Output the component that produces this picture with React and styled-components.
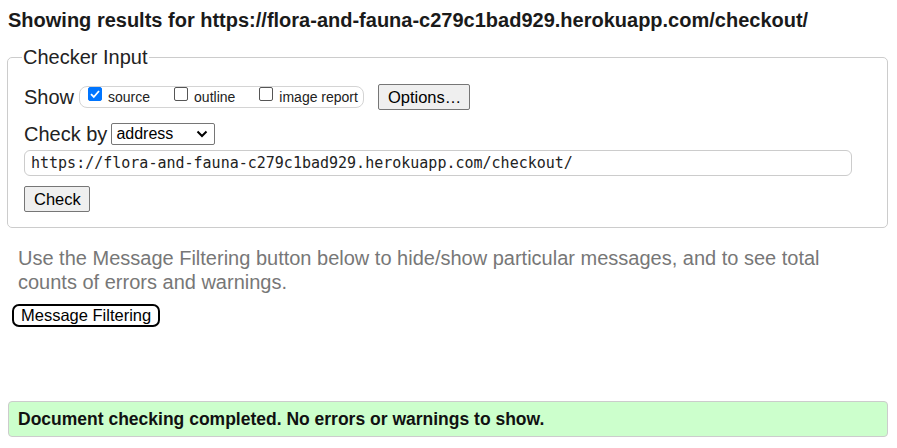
import React from "react";
import styled, { createGlobalStyle } from "styled-components";

const Global = createGlobalStyle`
  html, body { margin: 0; padding: 0; background: #fff; }
  body { font-family: "Liberation Sans", Arial, sans-serif; color: #000; }
`;

const Page = styled.div`
  padding: 8px 9px 0 8px;
`;

const Heading = styled.h2`
  margin: 0 0 13px 0;
  font-size: 20px;
  line-height: 24px;
  font-weight: bold;
  color: #1a1a1a;
  white-space: nowrap;
`;

const Fieldset = styled.fieldset`
  margin: 0 0 0 -1px;
  padding: 15px 16px 15px 16px;
  border: 1px solid #ccc;
  border-radius: 5px;
  min-width: 0;
`;

const Legend = styled.legend`
  padding: 0 1px;
  margin-left: -2px;
  font-size: 20px;
  line-height: 24px;
  color: #222;
`;

const Row = styled.div`
  display: flex;
  align-items: center;
  margin-top: ${(p) => p.$mt || 0}px;
  margin-bottom: ${(p) => p.$mb || 0}px;
`;

const Label = styled.span`
  font-size: 20px;
  line-height: 24px;
  color: #222;
`;

const CheckGroup = styled.div`
  display: flex;
  align-items: center;
  height: 20px;
  padding: 0 5px 0 8px;
  border: 1px solid #d4d4d4;
  border-radius: 8px;
  margin-left: 5px;
`;

const CheckItem = styled.label`
  display: flex;
  align-items: center;
  font-size: 14px;
  color: #222;
  margin-right: ${(p) => p.$mr || 0}px;
`;

const Box = styled.span`
  width: 14px;
  height: 14px;
  box-sizing: border-box;
  border: 1px solid ${(p) => (p.$on ? "#0075ff" : "#555")};
  background: ${(p) => (p.$on ? "#0075ff" : "#fff")};
  border-radius: 2px;
  margin-right: 6px;
  margin-top: -6px;
  display: flex;
  align-items: center;
  justify-content: center;
`;

const Button = styled.button`
  font-family: "Liberation Sans", Arial, sans-serif;
  font-size: 16.5px;
  line-height: 20px;
  height: 26px;
  color: #000;
  background: #efefef;
  border: 1px solid #767676;
  border-radius: 2px;
  padding: 2px 8px 2px 9px;
  margin-left: ${(p) => p.$ml || 0}px;
`;

const Select = styled.div`
  display: flex;
  align-items: center;
  justify-content: space-between;
  width: 104px;
  height: 22px;
  box-sizing: border-box;
  border: 1px solid #767676;
  border-radius: 2px;
  padding: 0 6px 0 4px;
  margin-left: 4px;
  font-size: 16px;
  color: #000;
`;

const UrlInput = styled.div`
  box-sizing: border-box;
  height: 26px;
  border: 1px solid #ccc;
  border-radius: 6px;
  margin-right: 19px;
  padding: 0 6px;
  display: flex;
  align-items: center;
  font-family: "DejaVu Sans Mono", "Liberation Mono", monospace;
  font-size: 15px;
  color: #222;
`;

const Note = styled.p`
  margin: 18px 40px 10px 10px;
  font-size: 20px;
  line-height: 24px;
  color: #777;
`;

const FilterButton = styled.button`
  display: block;
  font-family: "Liberation Sans", Arial, sans-serif;
  font-size: 16.5px;
  line-height: 17px;
  height: 23px;
  color: #000;
  background: #fff;
  border: 2px solid #000;
  border-radius: 7px;
  padding: 1px 7px;
  margin-left: 4px;
`;

const Success = styled.div`
  margin-top: 74px;
  box-sizing: border-box;
  height: 36px;
  border: 1px solid #ccc;
  border-radius: 4px;
  background: #ccffcc;
  padding: 0 9px;
  display: flex;
  align-items: center;
  font-size: 17.5px;
  font-weight: bold;
  color: #111;
`;

function Tick() {
  return (
    <svg width="12" height="12" viewBox="0 0 12 12">
      <path d="M2 6.2 L4.8 9 L10 3" stroke="#fff" strokeWidth="1.8" fill="none" />
    </svg>
  );
}

export default function App() {
  return (
    <>
      <Global />
      <Page>
        <Heading>Showing results for https://flora-and-fauna-c279c1bad929.herokuapp.com/checkout/</Heading>
        <Fieldset>
          <Legend>Checker Input</Legend>
          <Row $mb={12}>
            <Label>Show</Label>
            <CheckGroup>
              <CheckItem $mr={24}>
                <Box $on><Tick /></Box>source
              </CheckItem>
              <CheckItem $mr={24}>
                <Box />outline
              </CheckItem>
              <CheckItem>
                <Box />image report
              </CheckItem>
            </CheckGroup>
            <Button $ml={14}>Options…</Button>
          </Row>
          <Row $mb={4}>
            <Label>Check by</Label>
            <Select>
              address
              <svg width="12" height="8" viewBox="0 0 12 8">
                <path d="M1.5 1.5 L6 6 L10.5 1.5" stroke="#000" strokeWidth="2" fill="none" />
              </svg>
            </Select>
          </Row>
          <UrlInput>https://flora-and-fauna-c279c1bad929.herokuapp.com/checkout/</UrlInput>
          <Row $mt={10}>
            <Button>Check</Button>
          </Row>
        </Fieldset>
        <Note>Use the Message Filtering button below to hide/show particular messages, and to see total counts of errors and warnings.</Note>
        <FilterButton>Message Filtering</FilterButton>
        <Success>Document checking completed. No errors or warnings to show.</Success>
      </Page>
    </>
  );
}
